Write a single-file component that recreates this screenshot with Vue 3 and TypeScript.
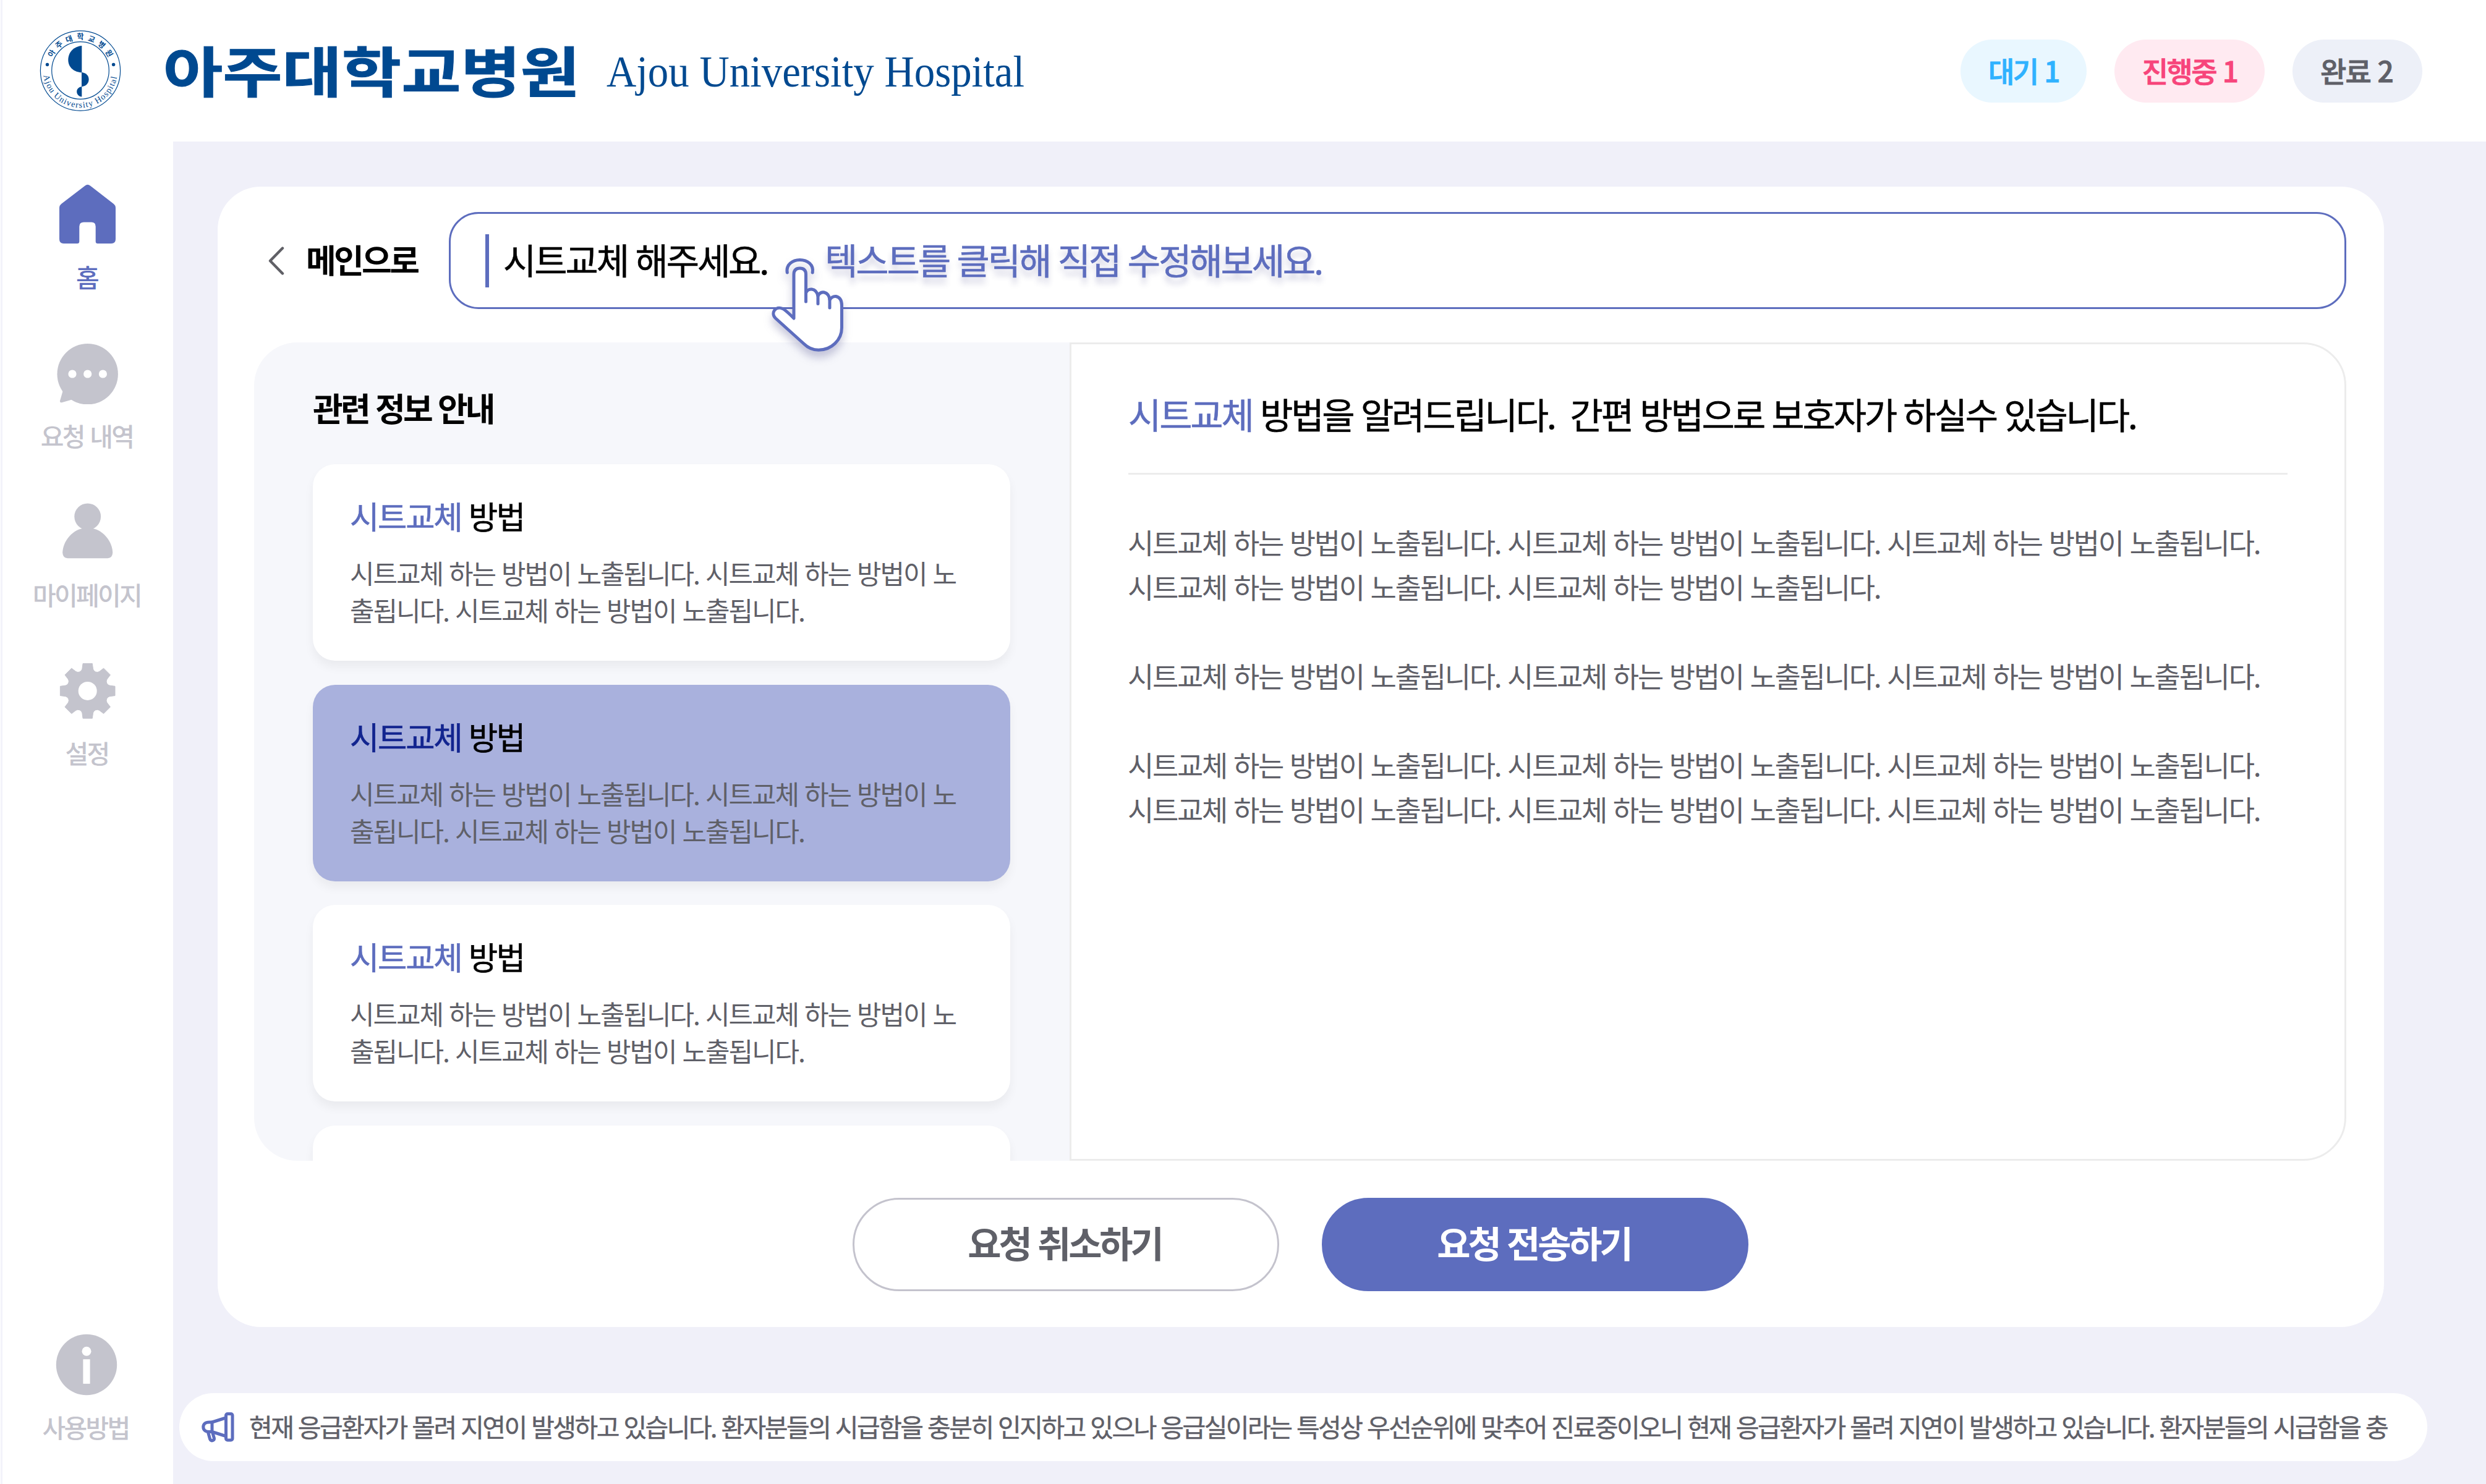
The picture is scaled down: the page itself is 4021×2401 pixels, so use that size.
<script setup lang="ts">
interface NavItem {
  id: 'home' | 'chat' | 'person' | 'gear'
  label: string
  active?: boolean
}

const navItems: NavItem[] = [
  { id: 'home', label: '홈', active: true },
  { id: 'chat', label: '요청 내역' },
  { id: 'person', label: '마이페이지' },
  { id: 'gear', label: '설정' },
]

const statuses = [
  { id: 'wait', text: '대기 1' },
  { id: 'progress', text: '진행중 1' },
  { id: 'done', text: '완료 2' },
]

const keyword = '시트교체'
const sentence = '시트교체 하는 방법이 노출됩니다.'
const cards = [
  { id: 1, active: false },
  { id: 2, active: true },
  { id: 3, active: false },
]

const repeat = (n: number): string => Array(n).fill(sentence).join(' ')
const paragraphs: string[][] = [[repeat(3), repeat(2)], [repeat(3)], [repeat(3), repeat(3)]]

const notice =
  '현재 응급환자가 몰려 지연이 발생하고 있습니다. 환자분들의 시급함을 충분히 인지하고 있으나 응급실이라는 특성상 우선순위에 맞추어 진료중이오니 현재 응급환자가 몰려 지연이 발생하고 있습니다. 환자분들의 시급함을 충'

const sealLetters = '아주대학교병원'.split('').map((char, i) => ({ char, angle: (i - 3) * 19.6 }))

// Eight-tooth gear outline around (49.7, 50.9)
function gearPath(): string {
  const at = (x: number, y: number, k: number): string => {
    const a = (k * Math.PI) / 4
    const px = 49.7 + x * Math.cos(a) - y * Math.sin(a)
    const py = 50.9 + x * Math.sin(a) + y * Math.cos(a)
    return `${px.toFixed(2)} ${py.toFixed(2)}`
  }
  let d = `M${at(-8.8, -35.5, 0)}`
  for (let k = 0; k < 8; k++) {
    d += `L${at(-7.6, -44.3, k)}L${at(7.6, -44.3, k)}L${at(8.8, -35.5, k)}`
    d += `A6.8 6.8 0 0 0 ${at(-8.8, -35.5, k + 1)}`
  }
  return d + 'Z'
}
const gear = gearPath()
</script>

<template>
  <div class="app">
    <header class="header">
      <svg class="brand" viewBox="4 0 1756 229" width="1756" height="229">
        <g fill="none" stroke="#004990" stroke-width="1.2">
          <circle cx="130" cy="114.5" r="64.6" />
          <circle cx="130" cy="114" r="46.3" />
        </g>
        <g fill="#004990">
          <path d="M132.3 74C120 75 110.3 84 110.3 97C110.3 109 120 117 132.3 117.3Z" />
          <path d="M132 117C139 118 143.6 122 143.6 128.5C143.6 135 139 139.5 132 140.2Z" />
          <path d="M132.3 140C127 141 124.2 144 124.2 148C124.2 152.5 127 156 132.3 156.6Z" />
          <circle cx="76.5" cy="104.5" r="2.7" />
          <circle cx="183.6" cy="104.5" r="2.7" />
          <text
            v-for="s in sealLetters"
            :key="s.angle"
            class="seal-ko"
            x="130"
            y="64.4"
            text-anchor="middle"
            :transform="`rotate(${s.angle} 130 114.5)`"
          >{{ s.char }}</text>
          <path id="seal-arc" d="M70.5 122A60 60 0 0 0 189.5 122" fill="none" />
          <text class="seal-en" textLength="170" lengthAdjust="spacing">
            <textPath href="#seal-arc" textLength="170">Ajou University Hospital</textPath>
          </text>
          <text class="brand-ko" x="264" y="149" textLength="674" lengthAdjust="spacingAndGlyphs">아주대학교병원</text>
          <text class="brand-en" x="981" y="139.7" textLength="676" lengthAdjust="spacingAndGlyphs">Ajou University Hospital</text>
        </g>
      </svg>
      <div class="statuses">
        <span v-for="s in statuses" :key="s.id" class="pill" :class="s.id">{{ s.text }}</span>
      </div>
    </header>

    <aside class="sidebar">
      <nav class="nav">
        <a v-for="item in navItems" :key="item.id" class="nav-item" :class="{ active: item.active }">
          <svg viewBox="0 0 100 100" width="100" height="100" fill="currentColor">
            <path
              v-if="item.id === 'home'"
              d="M45.5 3.5Q49.7 .2 54 3.5L92 33Q95 35.5 95 39V90Q95 97 88 97H66Q62.7 97 62.7 93.5V69.5Q62.7 62.5 56 62.5H43.5Q36.3 62.5 36.3 69.5V93.5Q36.3 97 33 97H11Q4 97 4 90V39Q4 35.5 7 33Z"
            />
            <template v-else-if="item.id === 'chat'">
              <circle cx="49.7" cy="51.2" r="49.2" />
              <path d="M9.8 78L5 94.5Q4.8 97.8 8 97.3L24.5 92.5L30 80L14 70Z" />
              <g fill="#fff">
                <circle cx="25" cy="51" r="6.6" />
                <circle cx="49.7" cy="51" r="6.6" />
                <circle cx="74.4" cy="51" r="6.6" />
              </g>
            </template>
            <template v-else-if="item.id === 'person'">
              <circle cx="49.7" cy="24.8" r="21.4" />
              <path d="M49.7 43C25 43 9.2 66 9.2 83.5Q9.8 92 17.5 92.2H81.9Q89.6 92 90.2 83.5C90.2 66 74.4 43 49.7 43Z" />
            </template>
            <template v-else>
              <path :d="gear" stroke="currentColor" stroke-width="1" stroke-linejoin="round" />
              <circle cx="49.7" cy="50.9" r="15" fill="#fff" />
            </template>
          </svg>
          <span>{{ item.label }}</span>
        </a>
      </nav>
      <a class="nav-item guide">
        <svg viewBox="0 0 100 100" width="100" height="100">
          <circle cx="50" cy="50" r="49.2" fill="currentColor" />
          <circle cx="50" cy="28.3" r="7.5" fill="#fff" />
          <rect x="44.4" y="41.2" width="11.2" height="39.6" fill="#fff" />
        </svg>
        <span>사용방법</span>
      </a>
    </aside>

    <main class="main">
      <section class="board">
        <div class="topbar">
          <a class="back">
            <svg viewBox="0 0 26 46" width="26" height="46" fill="none" stroke="#606066" stroke-width="4.4" stroke-linecap="round" stroke-linejoin="round">
              <path d="M23 2.5L3 23L23 43.5" />
            </svg>
            <span>메인으로</span>
          </a>
          <div class="field">
            <i class="caret"></i>
            <span class="value">시트교체 해주세요.</span>
            <span class="hint">텍스트를 클릭해 직접 수정해보세요.</span>
            <svg class="hand" viewBox="1240 410 140 190" width="140" height="190" fill="none" stroke="#5d6dbe" stroke-width="5" stroke-linecap="round" stroke-linejoin="round">
              <path d="M1273.3 441C1271 428 1282 420.5 1293.7 420.5C1306 420.5 1316.5 428 1314.2 441" />
              <path
                fill="#fff"
                d="M1284 515V444Q1284 434 1293.7 434Q1303.5 434 1303.5 444V474Q1306 467.5 1313 468Q1321 469 1323 479Q1326 472 1333 473Q1341 475 1342 485Q1346 479 1352 479.5Q1361.5 481.5 1361.5 494V530C1361.5 550 1345 566.3 1324 566.3C1313 566.3 1306 562 1300 556L1254.5 515C1246 507 1254 494 1266 499.5Q1270 501 1284 515Z"
              />
              <path d="M1303.5 470V488M1323 477V491.5M1342 483V498" />
            </svg>
          </div>
        </div>

        <div class="content">
          <div class="list">
            <h2>관련 정보 안내</h2>
            <article v-for="c in cards" :key="c.id" class="card" :class="{ selected: c.active }">
              <h3><em>{{ keyword }}</em> 방법</h3>
              <p>시트교체 하는 방법이 노출됩니다. 시트교체 하는 방법이 노<br />출됩니다. 시트교체 하는 방법이 노출됩니다.</p>
            </article>
            <article class="card"></article>
          </div>
          <div class="detail">
            <h2><em>{{ keyword }}</em> 방법을 알려드립니다.&nbsp; 간편 방법으로 보호자가 하실수 있습니다.</h2>
            <p v-for="(lines, i) in paragraphs" :key="i">
              <span v-for="(line, j) in lines" :key="j">{{ line }}</span>
            </p>
          </div>
        </div>

        <div class="actions">
          <button class="btn cancel" type="button">요청 취소하기</button>
          <button class="btn send" type="button">요청 전송하기</button>
        </div>
      </section>

      <div class="notice">
        <svg viewBox="0 0 53 49" width="53" height="49" fill="none" stroke="#5d6dbe" stroke-width="5" stroke-linejoin="round" stroke-linecap="round">
          <rect x="39.5" y="2.5" width="10.5" height="42.5" rx="2.5" />
          <path d="M39 9L17 16V31.5L39 38.5" />
          <path d="M17 16H12.5C6 16 2.8 19 2.8 23.8C2.8 28.5 6 31.5 12.5 31.5H17" />
          <path d="M10.5 32L13.5 43Q15 46.5 18 45.7Q21 44.5 20.3 41.5L17.8 33" />
        </svg>
        <span>{{ notice }}</span>
      </div>
    </main>
  </div>
</template>

<style>
html,
body {
  margin: 0;
  background: #fff;
  overflow: hidden;
}
</style>

<style scoped>
.app {
  box-sizing: border-box;
  display: grid;
  grid-template: 229px 2172px / 276px 1fr;
  width: 4020px;
  height: 2401px;
  margin-left: 1px;
  border-left: 3px solid #f3f3fa;
  background: #fff;
  color: #000;
  font-family: 'Noto Sans CJK KR', 'Noto Sans', sans-serif;
  white-space: nowrap;
}
h2,
h3,
p {
  margin: 0;
  font-weight: 400;
}
em {
  font-style: normal;
  color: #5d6dbe;
}

.header {
  grid-column: 1 / 3;
  display: flex;
  justify-content: space-between;
}
.brand {
  display: block;
  overflow: visible;
}
.brand-ko {
  font-size: 88px;
  font-weight: 700;
  stroke: #004990;
  stroke-width: 1px;
}
.brand-en {
  font-family: 'Liberation Serif', serif;
  font-size: 72px;
}
.seal-ko {
  font-size: 12px;
  font-weight: 700;
}
.seal-en {
  font-family: 'Liberation Serif', serif;
  font-size: 14px;
}
.statuses {
  display: flex;
  align-items: flex-start;
  gap: 45px;
  padding: 64px 103px 0 0;
}
.pill {
  box-sizing: border-box;
  height: 102px;
  border-radius: 51px;
  font-size: 46px;
  font-weight: 500;
  line-height: 98px;
  letter-spacing: -2.6px;
  word-spacing: 3px;
  text-align: center;
  -webkit-text-stroke: 0.9px currentColor;
}
.pill.wait {
  width: 204px;
  background: #e9f7ff;
  color: #2fb2ff;
}
.pill.progress {
  width: 243px;
  background: #ffeaf1;
  color: #f7457b;
}
.pill.done {
  width: 210px;
  padding-right: 3px;
  background: #edf0f8;
  color: #5f6068;
  letter-spacing: -1.8px;
}

.sidebar {
  display: flex;
  flex-direction: column;
  justify-content: space-between;
  padding: 68px 0 42px;
}
.nav {
  display: flex;
  flex-direction: column;
}
.nav-item {
  display: flex;
  flex-direction: column;
  align-items: center;
  gap: 20px;
  height: 256.8px;
  color: #c4c4cd;
  font-size: 41px;
  font-weight: 500;
  line-height: 60px;
  letter-spacing: -2.7px;
  word-spacing: 3px;
}
.nav-item span {
  margin-right: 3px;
}
.nav-item.active {
  color: #5d6dbe;
}
.nav-item.guide {
  height: 201px;
  margin-right: 4px;
}

.main {
  display: flex;
  flex-direction: column;
  align-items: flex-start;
  background: #f0f0f9;
}
.board {
  box-sizing: border-box;
  display: flex;
  flex-direction: column;
  width: 3504px;
  height: 1845px;
  margin: 73px 0 0 72px;
  padding: 41px 61px 58px 59px;
  border-radius: 70px;
  background: #fff;
}
.topbar {
  display: flex;
  height: 157px;
}
.back {
  box-sizing: border-box;
  display: flex;
  align-items: center;
  gap: 35px;
  width: 315px;
  padding-left: 23px;
  font-size: 53px;
  font-weight: 700;
  letter-spacing: -3.7px;
  line-height: 80px;
}
.back span {
  margin-top: -6px;
}
.field {
  position: relative;
  box-sizing: border-box;
  display: flex;
  flex: 1;
  align-items: center;
  border: 3.4px solid #5d6dbe;
  border-radius: 48px;
  font-size: 58px;
  line-height: 80px;
  letter-spacing: -3.15px;
  word-spacing: 2.8px;
  -webkit-text-stroke: 0.6px currentColor;
}
.caret {
  width: 6px;
  height: 86px;
  margin-left: 56px;
  background: #5d6dbe;
}
.value {
  width: 520px;
  margin: -6px 0 0 23px;
}
.hint {
  margin-top: -6px;
  color: #5d6dbe;
  text-shadow: 0 10px 10px rgba(60, 60, 130, 0.25);
}
.hand {
  position: absolute;
  left: 511px;
  top: 64px;
  z-index: 2;
  filter: drop-shadow(0 10px 7px rgba(60, 60, 130, 0.28));
}

.content {
  display: flex;
  height: 1324px;
  margin-top: 54px;
}
.list {
  box-sizing: border-box;
  width: 1319px;
  padding: 62px 0 0 95px;
  border-radius: 70px 0 0 70px;
  background: #f6f7fb;
  overflow: hidden;
}
.list h2 {
  height: 135px;
  font-size: 53px;
  font-weight: 700;
  line-height: 86px;
  letter-spacing: -3.8px;
  word-spacing: 2.8px;
}
.card {
  box-sizing: border-box;
  width: 1128px;
  height: 318.2px;
  margin-bottom: 38.4px;
  padding: 46px 40px 0 60px;
  border-radius: 36px;
  background: #fff;
  box-shadow: 0 10px 16px rgba(0, 0, 0, 0.05);
}
.card h3 {
  font-size: 51.5px;
  line-height: 74px;
  letter-spacing: -2.3px;
  word-spacing: 2.2px;
  -webkit-text-stroke: 0.6px currentColor;
}
.card p {
  margin-top: 25px;
  color: #5f6068;
  font-size: 43px;
  line-height: 60px;
  letter-spacing: -2.07px;
  word-spacing: 2.5px;
}
.card.selected {
  background: #a9b1dd;
}
.card.selected em {
  color: #12248f;
}

.detail {
  box-sizing: border-box;
  flex: 1;
  padding: 72px 92px 0 91px;
  border: 3px solid #ececec;
  border-radius: 0 70px 70px 0;
}
.detail h2 {
  height: 136px;
  margin: 0 0 72px 1px;
  border-bottom: 3px solid #ececec;
  font-size: 58px;
  line-height: 80px;
  letter-spacing: -3.2px;
  word-spacing: 2.6px;
  -webkit-text-stroke: 0.6px currentColor;
}
.detail p {
  margin-bottom: 72px;
  color: #5f6068;
  font-size: 46px;
  line-height: 72px;
  letter-spacing: -2.3px;
  word-spacing: 2.8px;
}
.detail p span {
  display: block;
}

.actions {
  display: flex;
  gap: 69px;
  margin: 60px 0 0 968px;
}
.btn {
  box-sizing: border-box;
  width: 690px;
  height: 151px;
  padding: 0 4px 8px 0;
  border: 3px solid #c4c3cd;
  border-radius: 76px;
  background: #fff;
  color: #5f6068;
  font-family: inherit;
  font-size: 59px;
  font-weight: 700;
  letter-spacing: -4.1px;
  word-spacing: 3px;
}
.btn.send {
  border-color: #5d6dbe;
  background: #5d6dbe;
  color: #fff;
}

.notice {
  box-sizing: border-box;
  display: flex;
  align-items: center;
  width: 3636px;
  height: 110px;
  margin: 107px 0 0 10px;
  padding: 0 36px;
  border-radius: 55px;
  background: #fff;
  color: #5f6068;
  font-size: 41px;
  line-height: 60px;
  letter-spacing: -2.55px;
  word-spacing: 1.9px;
}
.notice span {
  margin: -4px 0 0 24px;
  -webkit-text-stroke: 0.5px currentColor;
}
</style>
